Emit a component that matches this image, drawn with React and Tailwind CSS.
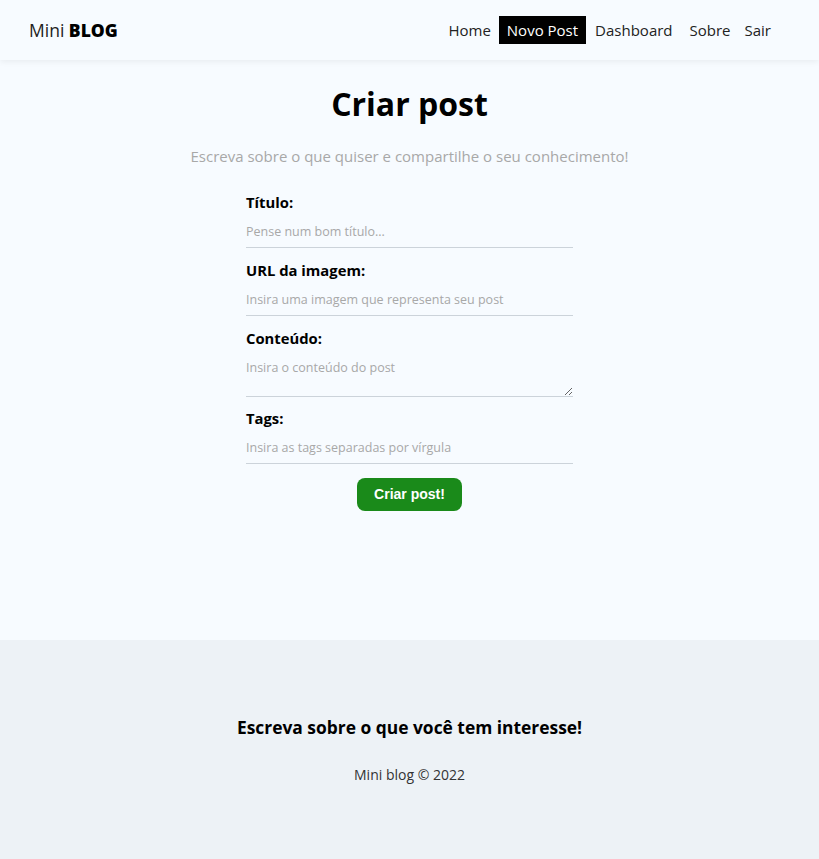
export default function App() {
  const f = { fontFamily: '"Open Sans", "Noto Sans", sans-serif' };
  const inputCls =
    "w-full bg-transparent border-0 border-b border-[#ccd3da] py-[7px] text-[12.5px] leading-[17px] text-[#333] placeholder:text-[#a8a8a8] outline-none";
  return (
    <div className="min-h-[859px] flex flex-col bg-[#f7fbff] text-black" style={f}>
      <nav className="h-[60px] flex items-center justify-between pl-[29px] pr-[42px] shadow-[0_2px_6px_rgba(0,0,0,0.06)] bg-[#f7fbff]">
        <div className="text-[17.5px] text-[#222]">
          Mini <span className="font-extrabold text-black">BLOG</span>
        </div>
        <ul className="flex items-center text-[15px] text-[#222]">
          <li className="px-[4px]">Home</li>
          <li className="px-[8px] py-[3px] ml-[4px] bg-black text-white">Novo Post</li>
          <li className="px-[9px]">Dashboard</li>
          <li className="px-[8px]">Sobre</li>
          <li className="px-[6px]">Sair</li>
        </ul>
      </nav>
      <main className="flex-1 flex flex-col items-center pt-[24px] min-h-[580px]">
        <h1 className="text-[32px] font-bold leading-[40px]">Criar post</h1>
        <p className="mt-[21px] text-[15px] text-[#a8a8a8]">
          Escreva sobre o que quiser e compartilhe o seu conhecimento!
        </p>
        <form className="w-[327px] mt-[25px] flex flex-col" onSubmit={(e) => e.preventDefault()}>
          <label className="flex flex-col">
            <span className="text-[14.8px] font-bold leading-[18px]">Título:</span>
            <input className={inputCls + " mt-[5px]"} placeholder="Pense num bom título..." />
          </label>
          <label className="flex flex-col mt-[13px]">
            <span className="text-[14.8px] font-bold leading-[18px]">URL da imagem:</span>
            <input className={inputCls + " mt-[5px]"} placeholder="Insira uma imagem que representa seu post" />
          </label>
          <label className="flex flex-col mt-[13px]">
            <span className="text-[14.8px] font-bold leading-[18px]">Conteúdo:</span>
            <textarea className={inputCls + " mt-[5px] h-[45px] resize-y"} placeholder="Insira o conteúdo do post" />
          </label>
          <label className="flex flex-col mt-[12px]">
            <span className="text-[14.8px] font-bold leading-[18px]">Tags:</span>
            <input className={inputCls + " mt-[5px]"} placeholder="Insira as tags separadas por vírgula" />
          </label>
          <button
            type="submit"
            className="self-center mt-[14px] w-[105px] h-[33px] rounded-[8px] bg-[#1a8a1a] text-white text-[14px] font-bold"
            style={{ fontFamily: '"Liberation Sans", Arial, sans-serif' }}
          >
            Criar post!
          </button>
        </form>
      </main>
      <footer className="h-[219px] bg-[#edf2f6] flex flex-col items-center justify-center">
        <h3 className="text-[17.4px] font-bold">Escreva sobre o que você tem interesse!</h3>
        <p className="mt-[24px] text-[14px] text-[#333]">Mini blog © 2022</p>
      </footer>
    </div>
  );
}
